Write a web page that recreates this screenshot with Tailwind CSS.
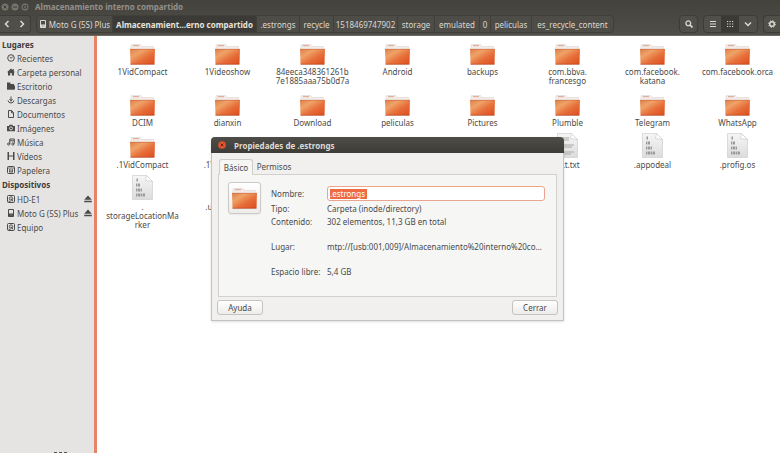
<!DOCTYPE html>
<html lang="es">
<head>
    <meta charset="UTF-8">
    <meta name="viewport" content="width=device-width, initial-scale=1.0">
    <title>Almacenamiento interno compartido</title>
    <script src="https://cdn.jsdelivr.net/npm/@tailwindcss/browser@4"></script>
</head>
<body class="relative flex flex-col min-h-screen overflow-hidden bg-white font-['Noto_Sans','Open_Sans',sans-serif] text-[8px] leading-[9px] text-[#4a4a4a]">

    <!-- shared icons (size 0 rather than hidden, so the gradients still work) -->
    <svg class="absolute size-0" aria-hidden="true">
        <defs>
            <linearGradient id="orange" x1="0" y1="0" x2="1" y2="1">
                <stop offset="0" stop-color="#dc7f4b"/>
                <stop offset=".3" stop-color="#efa268"/>
                <stop offset=".6" stop-color="#e76f3a"/>
                <stop offset="1" stop-color="#dc4d1d"/>
            </linearGradient>
            <linearGradient id="paper" x1="0" y1="0" x2="0" y2="1">
                <stop offset="0" stop-color="#f6f6f6"/>
                <stop offset="1" stop-color="#dcdcdc"/>
            </linearGradient>
        </defs>
        <symbol id="folder" viewBox="0 0 25 21">
            <path d="M1 5V1.5Q1 .5 2 .5H10.500L12 2.500H23.500V7H1z" fill="#f1ece9" stroke="#d8cdc8" stroke-width=".5"/>
            <path d="M3 1.700H9" stroke="#dd9a80" stroke-width=".9"/>
            <path d="M0 5H25L24.500 20H.5z" fill="url(#orange)"/>
            <path d="M.2 5.300H24.800" stroke="#c9683f" stroke-width=".6"/>
            <path d="M.5 20.300H24.500" stroke="#b5421c" stroke-width=".8"/>
        </symbol>
        <symbol id="binfile" viewBox="0 0 21 25">
            <path d="M.5.5H14.500L20.500 6.500V24.500H.5z" fill="url(#paper)" stroke="#cfcfcf" stroke-width=".7"/>
            <path d="M14.500.5L13.500 5.500L20.500 6.500z" fill="#fff" stroke="#c4c4c4" stroke-width=".6"/>
            <g stroke="#9a9a9a" stroke-width="2.800">
                <path d="M4.500 5H6M4 10H5M5.600 10H8M4 15H5M5.600 15H8M8.600 15H10M4 20H5M5.600 20H8M8.600 20H10M10.600 20H13"/>
            </g>
        </symbol>
        <symbol id="textfile" viewBox="0 0 21 25">
            <path d="M.5.5H14.500L20.500 6.500V24.500H.5z" fill="url(#paper)" stroke="#cfcfcf" stroke-width=".7"/>
            <path d="M14.500.5L13.500 5.500L20.500 6.500z" fill="#fff" stroke="#c4c4c4" stroke-width=".6"/>
            <path d="M3 5H12M3 7H12M3 12H17M3 14H15M3 19H17M3 21H14" stroke="#a9a9a9"/>
        </symbol>
        <symbol id="phone" viewBox="0 0 8 8">
            <path d="M1.500.5H6.500V7.500H1.500z" fill="none" stroke="currentColor"/>
            <path d="M1.500 4.500H6.500V7.500H1.500z" fill="currentColor"/>
            <path d="M3 6H3.800M4.500 6H5.300" stroke="#888"/>
        </symbol>
        <symbol id="disk" viewBox="0 0 8 8">
            <rect x=".5" y=".5" width="7" height="7" rx="1" fill="none" stroke="currentColor"/>
            <circle cx="4" cy="3.500" r="1.700" fill="none" stroke="currentColor" stroke-width=".9"/>
            <path d="M4 3.500L6 6.500M1.500 6.300H3.500" stroke="currentColor"/>
        </symbol>
        <symbol id="eject" viewBox="0 0 8 8">
            <path d="M4 .5L7.800 4.800H.2zM.2 5.700H7.800V7.200H.2z" fill="currentColor"/>
        </symbol>
    </svg>

    <!-- window title -->
    <header class="bg-linear-to-b from-[#43423d] to-[#504e49] border-b border-[#6e6a64]">
        <div class="flex items-center h-[13px] pl-px gap-[2px]">
            <button aria-label="Cerrar ventana" class="size-2"><svg class="size-2" viewBox="0 0 8 8"><circle cx="4" cy="4" r="3.500" fill="#77746c"/><path d="M2.500 2.500L5.500 5.500M5.500 2.500L2.500 5.500" stroke="#3c3b37"/></svg></button>
            <button aria-label="Minimizar" class="size-2"><svg class="size-2" viewBox="0 0 8 8"><circle cx="4" cy="4" r="3.500" fill="#77746c"/><path d="M2 4H6" stroke="#3c3b37"/></svg></button>
            <button aria-label="Maximizar" class="size-2"><svg class="size-2" viewBox="0 0 8 8"><circle cx="4" cy="4" r="3.500" fill="#77746c"/><path d="M2.300 2.800H5.700V5.200H2.300z" fill="none" stroke="#3c3b37"/></svg></button>
            <h1 class="ml-[4px] font-bold text-[#93908a] whitespace-nowrap">Almacenamiento interno compartido</h1>
        </div>

        <!-- toolbar -->
        <div class="flex items-center h-[22px] text-[#dcd9d2] whitespace-nowrap">
            <div class="flex h-[18px] border border-l-0 border-[#3d3c38] rounded-r-sm bg-[#504f4a]">
                <button aria-label="Atrás" class="w-[13px] flex justify-center items-center"><svg class="size-2" viewBox="0 0 8 8" fill="none" stroke="currentColor" stroke-width="1.500"><path d="M5.500 1L2.500 4L5.500 7"/></svg></button>
                <button aria-label="Adelante" class="w-[17px] flex justify-center items-center"><svg class="size-2" viewBox="0 0 8 8" fill="none" stroke="currentColor" stroke-width="1.500"><path d="M2.500 1L5.500 4L2.500 7"/></svg></button>
            </div>
            <nav class="ml-[5px] flex h-[18px] border border-[#403f3a] rounded-sm bg-[#4d4c47] divide-x divide-[#403f3a]">
                <a href="#" class="w-[76px] flex items-center justify-center gap-[2px]"><svg class="size-2"><use href="#phone"/></svg>Moto G (5S) Plus</a>
                <a href="#" class="w-[144px] flex items-center justify-center font-bold bg-[#3b3a36] text-[#e6e3dc]">Almacenamient…erno compartido</a>
                <a href="#" class="w-[43px] flex items-center justify-center">.estrongs</a>
                <a href="#" class="w-[34px] flex items-center justify-center">recycle</a>
                <a href="#" class="w-[64px] flex items-center justify-center">1518469747902</a>
                <a href="#" class="w-[37px] flex items-center justify-center">storage</a>
                <a href="#" class="w-[45px] flex items-center justify-center">emulated</a>
                <a href="#" class="w-[11px] flex items-center justify-center">0</a>
                <a href="#" class="w-[41px] flex items-center justify-center">peliculas</a>
                <a href="#" class="w-[81px] flex items-center justify-center">es_recycle_content</a>
            </nav>
            <button aria-label="Buscar" class="ml-auto w-[19px] h-[18px] flex items-center justify-center border border-[#3d3c38] rounded-sm bg-[#504f4a]"><svg class="size-2" viewBox="0 0 8 8" fill="none" stroke="currentColor"><circle cx="3.300" cy="3.300" r="2.400" stroke-width="1.300"/><path d="M5 5L7.500 7.500" stroke-width="1.700"/></svg></button>
            <div class="ml-[5px] h-[18px] flex border border-[#3d3c38] rounded-sm bg-[#504f4a] overflow-hidden">
                <button aria-label="Vista de lista" class="w-[17px] flex items-center justify-center"><svg class="size-2" viewBox="0 0 8 8" stroke="currentColor" stroke-width="1.200"><path d="M1 1.500H7M1 4H7M1 6.500H7"/></svg></button>
                <button aria-label="Vista de iconos" class="w-[18px] flex items-center justify-center bg-[#3b3a36]"><svg class="size-2" viewBox="0 0 8 8" stroke="currentColor" stroke-width="1.200" stroke-dasharray="1.200 1.300"><path d="M1 1.500H7.200M1 4H7.200M1 6.500H7.200"/></svg></button>
                <button aria-label="Opciones de vista" class="w-[18px] flex items-center justify-center"><svg class="size-2" viewBox="0 0 8 8" fill="none" stroke="currentColor" stroke-width="1.500"><path d="M1 2.500L4 5.500L7 2.500"/></svg></button>
            </div>
            <button aria-label="Ajustes" class="ml-[5px] w-[17px] h-[18px] flex items-center justify-center border border-r-0 border-[#3d3c38] rounded-l-sm bg-[#504f4a]"><svg class="size-2" viewBox="0 0 8 8" fill="none" stroke="currentColor"><circle cx="4" cy="4" r="2.300" stroke-width="1.500"/><circle cx="4" cy="4" r="3.400" stroke-width="1" stroke-dasharray="1.200 1.470"/></svg></button>
        </div>
    </header>

    <div class="flex grow">
        <!-- sidebar -->
        <aside class="w-[97px] shrink-0 flex flex-col pt-px bg-[#e6e4e2] border-r-3 border-[#e58466] whitespace-nowrap">
            <h2 class="h-[14px] pl-[2px] flex items-center font-bold text-[#3c3c3c]">Lugares</h2>
            <ul>
                <li><a href="#" class="h-[14px] pl-[7px] flex items-center gap-[2px]"><svg class="size-2" viewBox="0 0 8 8" fill="none" stroke="currentColor"><circle cx="4" cy="4" r="3.300"/><path d="M4 4.300L5.800 2.800M4 4.300L2.700 3"/></svg>Recientes</a></li>
                <li><a href="#" class="h-[14px] pl-[7px] flex items-center gap-[2px]"><svg class="size-2" viewBox="0 0 8 8" fill="currentColor"><path d="M4 .5L8 4.300H7V7.500H4.800V5H3.200V7.500H1V4.300H0zM5.700 1H6.800V3H5.700z"/></svg>Carpeta personal</a></li>
                <li><a href="#" class="h-[14px] pl-[7px] flex items-center gap-[2px]"><svg class="size-2" viewBox="0 0 8 8" fill="currentColor"><path d="M0 .5H3.500V2H7V3H2V7.500H0zM2.500 3.500H8V7.500H2.500z"/><path d="M0 2H7V7.500H0z"/></svg>Escritorio</a></li>
                <li><a href="#" class="h-[14px] pl-[7px] flex items-center gap-[2px]"><svg class="size-2" viewBox="0 0 8 8" fill="none" stroke="currentColor"><path d="M4 .5V5.500M2.500 3L4 4.800L5.500 3M1 4.500Q1.500 7 4 7Q6.500 7 7 4.500"/></svg>Descargas</a></li>
                <li><a href="#" class="h-[14px] pl-[7px] flex items-center gap-[2px]"><svg class="size-2" viewBox="0 0 8 8" fill="none" stroke="currentColor"><path d="M1.500.5H4.500L6.500 2.500V7.500H1.500zM4.500.5V2.800H6.500"/></svg>Documentos</a></li>
                <li><a href="#" class="h-[14px] pl-[7px] flex items-center gap-[2px]"><svg class="size-2" viewBox="0 0 8 8"><path d="M0 2H2L2.500.8H5.500L6 2H8V7.200H0z" fill="currentColor"/><circle cx="4" cy="4.400" r="1.500" fill="none" stroke="#e6e4e2" stroke-width=".9"/></svg>Imágenes</a></li>
                <li><a href="#" class="h-[14px] pl-[7px] flex items-center gap-[2px]"><svg class="size-2" viewBox="0 0 8 8" fill="none" stroke="currentColor"><path d="M2.800 6V1H7.300V5.500M2.800 2.800H7.300"/><circle cx="1.700" cy="6" r="1.100"/><circle cx="5.900" cy="6" r="1.100"/></svg>Música</a></li>
                <li><a href="#" class="h-[14px] pl-[7px] flex items-center gap-[2px]"><svg class="size-2" viewBox="0 0 8 8" fill="none" stroke="currentColor"><path d="M1.500 0V8M6.500 0V8M1.500 4H6.500"/><path d="M.5 .5V8M7.500 .5V8" stroke-dasharray="1 1"/></svg>Vídeos</a></li>
                <li><a href="#" class="h-[14px] pl-[7px] flex items-center gap-[2px]"><svg class="size-2" viewBox="0 0 8 8" fill="none" stroke="currentColor"><rect x=".5" y=".5" width="7" height="7" rx="1"/><path d="M1 2H7M2.500 3V6M4 3V6M5.500 3V6M2 6H6" stroke-width=".8"/></svg>Papelera</a></li>
            </ul>
            <h2 class="h-[15px] pl-[2px] flex items-center font-bold text-[#3c3c3c]">Dispositivos</h2>
            <ul>
                <li class="h-[14px] pl-[7px] pr-[2px] flex items-center justify-between"><a href="#" class="flex items-center gap-[2px]"><svg class="size-2"><use href="#disk"/></svg>HD-E1</a><button aria-label="Expulsar HD-E1"><svg class="size-2"><use href="#eject"/></svg></button></li>
                <li class="h-[14px] pl-[7px] pr-[2px] flex items-center justify-between"><a href="#" class="flex items-center gap-[2px]"><svg class="size-2"><use href="#phone"/></svg>Moto G (5S) Plus</a><button aria-label="Expulsar Moto G"><svg class="size-2"><use href="#eject"/></svg></button></li>
                <li class="h-[14px] pl-[7px] flex items-center"><a href="#" class="flex items-center gap-[2px]"><svg class="size-2"><use href="#disk"/></svg>Equipo</a></li>
            </ul>
            <div class="mt-auto ml-[54px] w-[13px] border-b border-dashed border-[#555]"></div>
        </aside>

        <!-- files -->
        <main class="grow pl-[3px] pt-[3px]">
            <ul class="grid grid-cols-8 gap-y-[5px] text-center whitespace-nowrap [&>li]:flex [&>li]:flex-col [&>li]:items-center [&>li]:gap-[2px]">
                <li><svg class="w-[25px] h-[21px] mt-[5px]"><use href="#folder"/></svg>1VidCompact</li>
                <li><svg class="w-[25px] h-[21px] mt-[5px]"><use href="#folder"/></svg>1Videoshow</li>
                <li><svg class="w-[25px] h-[21px] mt-[5px]"><use href="#folder"/></svg><span>84eeca348361261b<br>7e1885aaa75b0d7a</span></li>
                <li><svg class="w-[25px] h-[21px] mt-[5px]"><use href="#folder"/></svg>Android</li>
                <li><svg class="w-[25px] h-[21px] mt-[5px]"><use href="#folder"/></svg>backups</li>
                <li><svg class="w-[25px] h-[21px] mt-[5px]"><use href="#folder"/></svg><span>com.bbva.<br>francesgo</span></li>
                <li><svg class="w-[25px] h-[21px] mt-[5px]"><use href="#folder"/></svg><span>com.facebook.<br>katana</span></li>
                <li><svg class="w-[25px] h-[21px] mt-[5px]"><use href="#folder"/></svg>com.facebook.orca</li>

                <li><svg class="w-[25px] h-[21px] mt-[5px]"><use href="#folder"/></svg>DCIM</li>
                <li><svg class="w-[25px] h-[21px] mt-[5px]"><use href="#folder"/></svg>dianxin</li>
                <li><svg class="w-[25px] h-[21px] mt-[5px]"><use href="#folder"/></svg>Download</li>
                <li><svg class="w-[25px] h-[21px] mt-[5px]"><use href="#folder"/></svg>peliculas</li>
                <li><svg class="w-[25px] h-[21px] mt-[5px]"><use href="#folder"/></svg>Pictures</li>
                <li><svg class="w-[25px] h-[21px] mt-[5px]"><use href="#folder"/></svg>Plumble</li>
                <li><svg class="w-[25px] h-[21px] mt-[5px]"><use href="#folder"/></svg>Telegram</li>
                <li><svg class="w-[25px] h-[21px] mt-[5px]"><use href="#folder"/></svg>WhatsApp</li>

                <li><svg class="w-[25px] h-[21px] mt-[5px]"><use href="#folder"/></svg>.1VidCompact</li>
                <li><svg class="w-[25px] h-[21px] mt-[5px]"><use href="#folder"/></svg>.1Videoshow</li>
                <li class="col-start-6"><svg class="w-[21px] h-[25px] mt-px"><use href="#textfile"/></svg>ALt.txt</li>
                <li><svg class="w-[21px] h-[25px] mt-px"><use href="#binfile"/></svg>.appodeal</li>
                <li><svg class="w-[21px] h-[25px] mt-px"><use href="#binfile"/></svg>.profig.os</li>

                <li><svg class="w-[21px] h-[25px] mt-px"><use href="#binfile"/></svg><span>.<br>storageLocationMa<br>rker</span></li>
                <li><svg class="w-[21px] h-[25px] mt-px"><use href="#binfile"/></svg>.userReturn</li>
            </ul>
        </main>
    </div>

    <!-- properties window -->
    <section role="dialog" aria-labelledby="dlg-title" class="absolute left-[211px] top-[137px] w-[353px] rounded-t-[4px] bg-[#f1f0ef] border-x border-b border-[#c4c2bf] shadow-sm">
        <div class="h-[16px] -mx-px px-[7px] flex items-center gap-[8px] rounded-t-[4px] bg-linear-to-b from-[#4e4d48] to-[#3d3c38] text-[#dfdbd2]">
            <button aria-label="Cerrar diálogo" class="size-2"><svg class="size-2" viewBox="0 0 8 8"><circle cx="4" cy="4" r="3.800" fill="#e2552f"/><path d="M2.700 2.700L5.300 5.300M5.300 2.700L2.700 5.300" stroke="#6b2715"/></svg></button>
            <h2 id="dlg-title" class="font-bold">Propiedades de .estrongs</h2>
        </div>
        <div class="px-[6px] pt-[6px]">
            <div role="tablist" class="flex pl-px">
                <button role="tab" aria-selected="true" class="w-[34px] h-[16px] -mb-px bg-[#f6f6f5] border border-b-0 border-[#cfcdca] rounded-t-[3px]">Básico</button>
                <button role="tab" aria-selected="false" class="w-[42px] h-[15px]">Permisos</button>
            </div>
            <div class="flex items-start gap-[10px] h-[123px] pt-[7px] pl-[9px] pr-[11px] bg-[#f6f6f5] border border-[#d3d1ce]">
                <button aria-label="Cambiar icono" class="w-[33px] h-[32px] shrink-0 flex items-center justify-center rounded-[3px] border border-[#cbc8c5] bg-linear-to-b from-white to-[#ececeb] shadow-xs"><svg class="w-[25px] h-[21px]"><use href="#folder"/></svg></button>
                <div class="grow min-w-0 grid grid-cols-[56px_minmax(0,1fr)] items-center whitespace-nowrap pt-[4px]">
                    <label for="nombre">Nombre:</label>
                    <div class="h-[15px] flex items-center px-[2px] rounded-[3px] border border-[#eba58e] bg-white">
                        <input id="nombre" type="text" value=".estrongs" class="w-[37px] h-[10px] bg-[#ee6a43] text-white outline-none">
                    </div>
                    <span class="pt-[3px]">Tipo:</span><span class="pt-[3px]">Carpeta (inode/directory)</span>
                    <span class="pt-[4px]">Contenido:</span><span class="pt-[4px]">302 elementos, 11,3 GB en total</span>
                    <span class="pt-4">Lugar:</span><span class="pt-4">mtp://[usb:001,009]/Almacenamiento%20interno%20co…</span>
                    <span class="pt-4">Espacio libre:</span><span class="pt-4">5,4 GB</span>
                </div>
            </div>
        </div>
        <div class="flex justify-between px-[5px] pt-[3px] pb-[5px]">
            <button class="w-[46px] h-[15px] rounded-[3px] border border-[#c6c3bf] bg-linear-to-b from-white to-[#ececeb]">Ayuda</button>
            <button class="w-[46px] h-[15px] rounded-[3px] border border-[#c6c3bf] bg-linear-to-b from-white to-[#ececeb]">Cerrar</button>
        </div>
    </section>
</body>
</html>
